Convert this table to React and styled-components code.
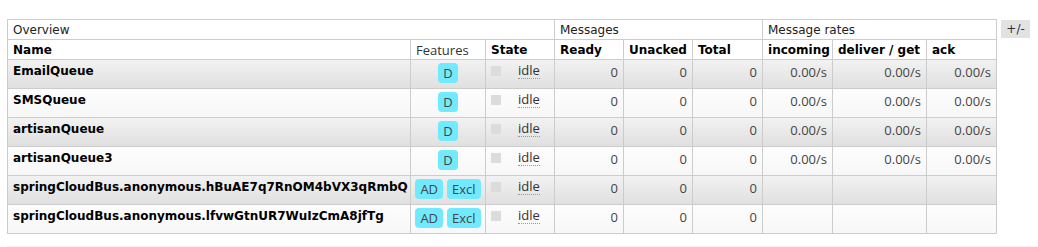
import React from 'react'
import styled, { createGlobalStyle } from 'styled-components'

const GlobalStyle = createGlobalStyle`
    html, body {
        margin: 0;
        padding: 0;
        background: #fff;
    }
    body {
        font: 12px "DejaVu Sans", Verdana, sans-serif;
        color: #000;
    }
`

const Page = styled.div`
    padding: 19px 0 0 7px;
`

const TableRow = styled.div`
    display: flex;
    align-items: flex-start;
    gap: 4px;
`

const QueueTable = styled.table`
    border-collapse: collapse;
    table-layout: fixed;
    width: 989px;
`

const GroupCell = styled.th`
    border: 1px solid #ccc;
    height: 19px;
    padding: 0 5px;
    font-weight: normal;
    text-align: left;
    color: #222;
    background: #fff;
`

const HeadCell = styled.th`
    border: 1px solid #ccc;
    height: 19px;
    padding: 0 5px;
    text-align: left;
    background: #fff;
    font-weight: ${p => (p.$plain ? 'normal' : 'bold')};
    font-family: ${p => (p.$plain ? '"Open Sans", sans-serif' : 'inherit')};
    font-size: ${p => (p.$plain ? '13px' : '12px')};
    color: ${p => (p.$plain ? '#333' : '#000')};
`

const DataRow = styled.tr`
    background: ${p => (p.$alt
        ? 'linear-gradient(#fdfdfd, #f7f7f7)'
        : 'linear-gradient(#f2f2f2, #dfdfdf)')};
`

const Cell = styled.td`
    border: 1px solid #ccc;
    height: 29px;
    padding: 2px 5px 0;
    vertical-align: top;
    box-sizing: border-box;
`

const NameCell = styled(Cell)`
    font-weight: bold;
    padding-top: 4px;
`

const NumCell = styled(Cell)`
    text-align: right;
    font-family: "Open Sans", sans-serif;
    font-size: 13px;
    color: #444;
    padding-top: 3px;
`

const FeatureCell = styled(Cell)`
    text-align: center;
    padding: 3px 2px 0;
`

const Badges = styled.div`
    display: flex;
    justify-content: center;
    gap: 4px;
`

const Badge = styled.span`
    display: inline-block;
    box-sizing: border-box;
    height: 20px;
    line-height: 20px;
    padding: 0 5px;
    min-width: 20px;
    border-radius: 4px;
    background: #72eafd;
    color: #444;
    font-family: "Open Sans", sans-serif;
    font-size: 13px;
    text-align: center;
`

const StateWrap = styled.div`
    display: flex;
    align-items: flex-start;
    padding-top: 4px;
`

const StateBox = styled.span`
    width: 10px;
    height: 10px;
    background: #dcdcdc;
    margin-right: 17px;
    flex: none;
`

const StateLabel = styled.abbr`
    font-family: "Open Sans", sans-serif;
    font-size: 13px;
    color: #333;
    line-height: 12px;
    text-decoration: none;
    border-bottom: 1px dotted #999;
    padding-bottom: 2px;
    margin-top: -2px;
`

const ToggleButton = styled.span`
    margin-top: 1px;
    width: 29px;
    height: 18px;
    line-height: 18px;
    text-align: center;
    background: #e2e2e2;
    color: #333;
    font-size: 12px;
`

const Footer = styled.div`
    margin-top: 12px;
    border-top: 1px solid #f3f3f3;
`

const queues = [
    { name: 'EmailQueue', features: ['D'], rates: true },
    { name: 'SMSQueue', features: ['D'], rates: true },
    { name: 'artisanQueue', features: ['D'], rates: true },
    { name: 'artisanQueue3', features: ['D'], rates: true },
    { name: 'springCloudBus.anonymous.hBuAE7q7RnOM4bVX3qRmbQ', features: ['AD', 'Excl'], rates: false },
    { name: 'springCloudBus.anonymous.lfvwGtnUR7WuIzCmA8jfTg', features: ['AD', 'Excl'], rates: false },
]

const widths = [403, 75, 69, 69, 69, 70, 70, 94, 70]

const App = () => {
    return (
        <Page>
            <GlobalStyle />
            <TableRow>
                <QueueTable>
                    <colgroup>
                        {widths.map((w, i) => <col key={i} style={{ width: w }} />)}
                    </colgroup>
                    <thead>
                        <tr>
                            <GroupCell colSpan={3}>Overview</GroupCell>
                            <GroupCell colSpan={3}>Messages</GroupCell>
                            <GroupCell colSpan={3}>Message rates</GroupCell>
                        </tr>
                        <tr>
                            <HeadCell>Name</HeadCell>
                            <HeadCell $plain>Features</HeadCell>
                            <HeadCell>State</HeadCell>
                            <HeadCell>Ready</HeadCell>
                            <HeadCell>Unacked</HeadCell>
                            <HeadCell>Total</HeadCell>
                            <HeadCell>incoming</HeadCell>
                            <HeadCell>deliver / get</HeadCell>
                            <HeadCell>ack</HeadCell>
                        </tr>
                    </thead>
                    <tbody>
                        {queues.map((q, i) => (
                            <DataRow key={q.name} $alt={i % 2 === 1}>
                                <NameCell>{q.name}</NameCell>
                                <FeatureCell>
                                    <Badges>
                                        {q.features.map(f => <Badge key={f}>{f}</Badge>)}
                                    </Badges>
                                </FeatureCell>
                                <Cell>
                                    <StateWrap>
                                        <StateBox />
                                        <StateLabel title="idle">idle</StateLabel>
                                    </StateWrap>
                                </Cell>
                                <NumCell>0</NumCell>
                                <NumCell>0</NumCell>
                                <NumCell>0</NumCell>
                                <NumCell>{q.rates ? '0.00/s' : ''}</NumCell>
                                <NumCell>{q.rates ? '0.00/s' : ''}</NumCell>
                                <NumCell>{q.rates ? '0.00/s' : ''}</NumCell>
                            </DataRow>
                        ))}
                    </tbody>
                </QueueTable>
                <ToggleButton>+/-</ToggleButton>
            </TableRow>
            <Footer />
        </Page>
    )
}

export default App
